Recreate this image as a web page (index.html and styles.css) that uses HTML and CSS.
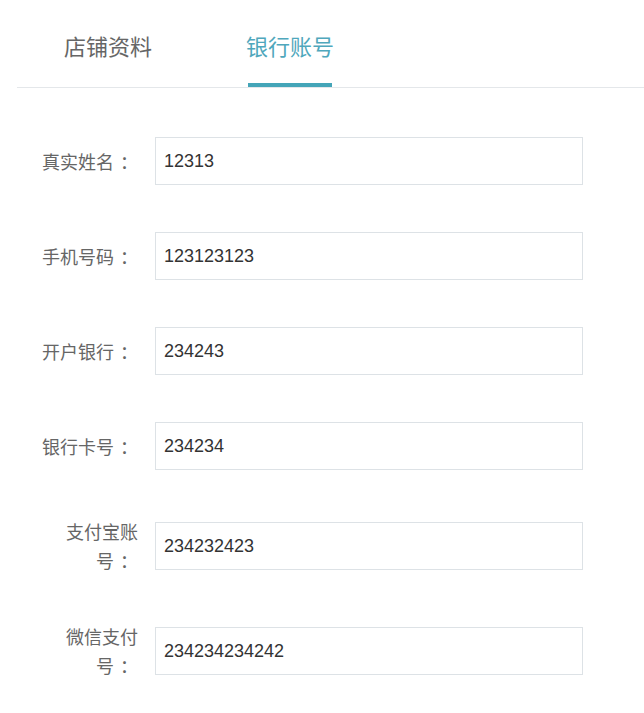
FILE: index.html
```html
<!DOCTYPE html>
<html lang="zh-CN">
<head>
  <meta charset="UTF-8" />
  <meta name="viewport" content="width=device-width, initial-scale=1.0" />
  <title>银行账号</title>
  <link rel="stylesheet" href="styles.css">
</head>
<body>
  <div class="tabs">
    <div class="tab"><span class="tab-text">店铺资料</span></div>
    <div class="tab active"><span class="tab-text">银行账号</span></div>
  </div>

  <form class="bank-form">
    <div class="form-row">
      <label class="form-label">真实姓名<span class="colon">：</span></label>
      <input class="form-input" type="text" value="12313">
    </div>
    <div class="form-row">
      <label class="form-label">手机号码<span class="colon">：</span></label>
      <input class="form-input" type="text" value="123123123">
    </div>
    <div class="form-row">
      <label class="form-label">开户银行<span class="colon">：</span></label>
      <input class="form-input" type="text" value="234243">
    </div>
    <div class="form-row">
      <label class="form-label">银行卡号<span class="colon">：</span></label>
      <input class="form-input" type="text" value="234234">
    </div>
    <div class="form-row">
      <label class="form-label">支付宝账<span class="tail">号<span class="colon">：</span></span></label>
      <input class="form-input" type="text" value="234232423">
    </div>
    <div class="form-row">
      <label class="form-label">微信支付<span class="tail">号<span class="colon">：</span></span></label>
      <input class="form-input" type="text" value="234234234242">
    </div>
  </form>
</body>
</html>
```

FILE: styles.css
```css
body {
  margin: 0;
  background: #fff;
  font-family: 'Liberation Sans', 'Noto Sans CJK SC', sans-serif;
  color: #333;
}

.tabs {
  display: flex;
  margin-left: 17px;
  border-bottom: 1px solid #e4e7ea;
}

.tab {
  padding: 37px 47px 0;
  font-size: 22px;
  line-height: 22px;
  color: #666;
}

.tab-text {
  display: block;
}

.tab-text::after {
  content: '';
  display: block;
  height: 4px;
  margin: 24px 2px 0;
  background: transparent;
}

.tab.active {
  color: #4fa7bc;
}

.tab.active .tab-text::after {
  background: #44a5b8;
}

.bank-form {
  padding: 49px 0 0 38px;
}

.form-row {
  display: flex;
  align-items: center;
  gap: 17px;
  margin-bottom: 47px;
}

.form-label {
  flex: 0 0 100px;
  text-align: right;
  font-family: 'Noto Sans CJK SC', sans-serif;
  font-size: 18px;
  line-height: 29px;
  color: #666;
}

.tail {
  display: inline-block;
  vertical-align: top;
}

.colon {
  margin-left: 6px;
  font-family: 'Noto Sans CJK JP', sans-serif;
}

.form-input {
  box-sizing: border-box;
  width: 428px;
  height: 48px;
  margin: 0;
  padding: 0 8px;
  border: 1px solid #dde2e6;
  border-radius: 0;
  outline: none;
  font-family: 'Liberation Sans', sans-serif;
  font-size: 18px;
  color: #333;
  background: #fff;
}
```
